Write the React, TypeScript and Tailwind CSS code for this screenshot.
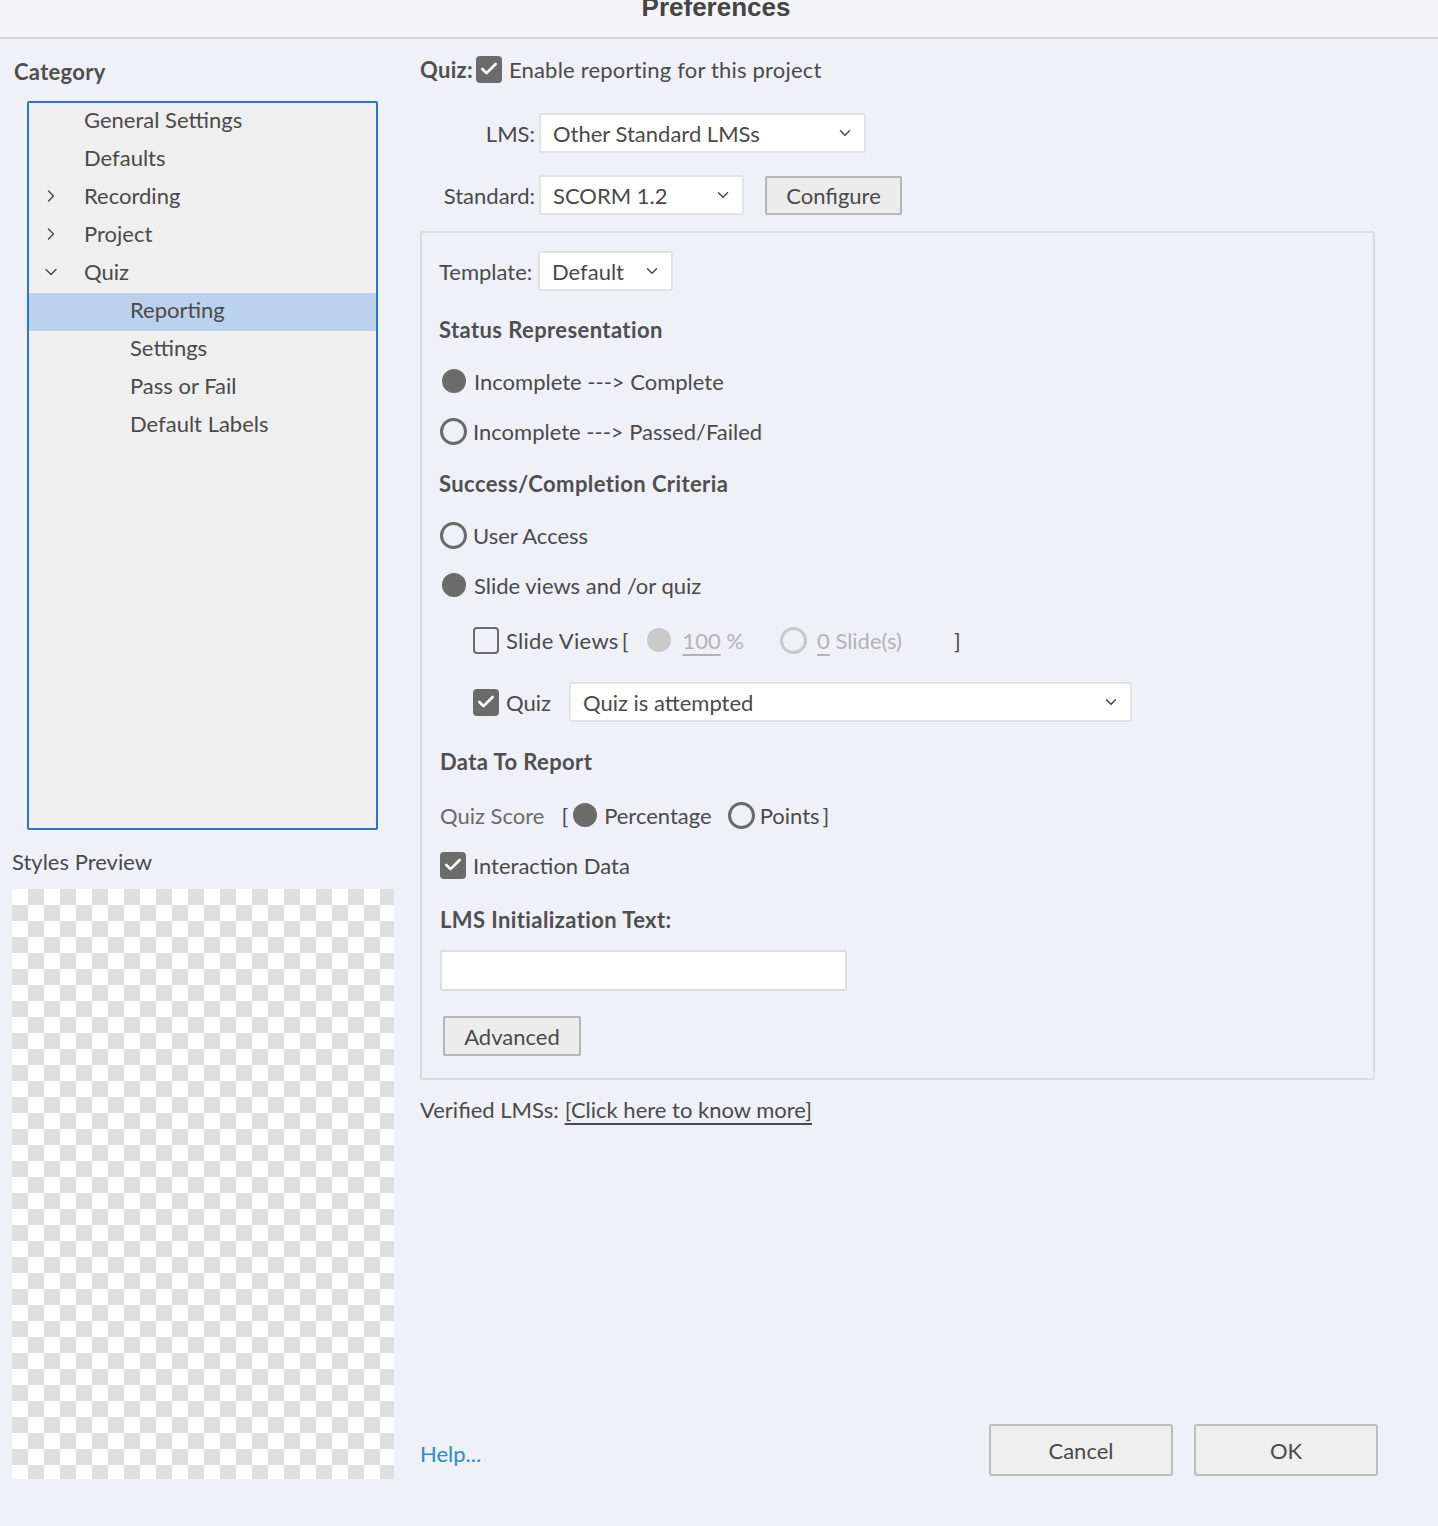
import { ChevronDown, ChevronRight, Check } from "lucide-react"

const font = "font-['Lato','Open_Sans',sans-serif]"

function Checkbox({ checked }: { checked: boolean }) {
  return checked ? (
    <span className="w-[26px] h-[27px] rounded-[4px] bg-[#6b6b6b] flex items-center justify-center flex-shrink-0">
      <Check className="w-[20px] h-[20px] text-white" strokeWidth={3.2} />
    </span>
  ) : (
    <span className="block w-[26px] h-[27px] rounded-[4px] border-[2.5px] border-[#6b6b6b] flex-shrink-0" />
  )
}

function Radio({ checked, disabled }: { checked: boolean; disabled?: boolean }) {
  const color = disabled ? "bg-[#c9c9c9]" : "bg-[#6b6b6b]"
  const ring = disabled ? "border-[#c9c9c9]" : "border-[#6b6b6b]"
  return checked ? (
    <span className={`block w-[24px] h-[24px] rounded-full flex-shrink-0 ${color}`} />
  ) : (
    <span className={`block w-[27px] h-[27px] rounded-full border-[3px] flex-shrink-0 ${ring}`} />
  )
}

function Select({ value, width }: { value: string; width: string }) {
  return (
    <div className={`${width} h-[40px] bg-white border-2 border-[#e3e3e3] rounded-[3px] flex items-center justify-between pl-[12px] pr-[10px]`}>
      <span>{value}</span>
      <ChevronDown className="w-[18px] h-[18px] text-[#4a4a4a]" strokeWidth={2} />
    </div>
  )
}

const tree = [
  { label: "General Settings", level: 0 },
  { label: "Defaults", level: 0 },
  { label: "Recording", level: 0, icon: "right" },
  { label: "Project", level: 0, icon: "right" },
  { label: "Quiz", level: 0, icon: "down" },
  { label: "Reporting", level: 1, selected: true },
  { label: "Settings", level: 1 },
  { label: "Pass or Fail", level: 1 },
  { label: "Default Labels", level: 1 },
]

const heading = "h-[30px] flex items-center font-bold text-[#4f4f4f] tracking-[0.4px]"

export default function App() {
  return (
    <div className={`w-[1438px] h-[1526px] bg-[#f0f1f6] text-[#4a4a4a] text-[22px] overflow-hidden flex flex-col ${font}`}>
      {/* Title bar */}
      <div className="h-[39px] flex-shrink-0 bg-[#f5f5f7] border-b-2 border-[#d6d6d8] flex justify-center overflow-hidden">
        <span className="font-['Liberation_Sans',sans-serif] font-bold text-[26px] text-[#444] leading-none -mt-[6px] ml-[-6px]">Preferences</span>
      </div>

      <div className="flex flex-1">
        {/* Left column */}
        <div className="w-[420px] flex-shrink-0 pl-[12px] flex flex-col">
          <div className="mt-[17px] ml-[2px] h-[30px] flex items-center font-bold text-[#4f4f4f] tracking-[0.3px]">Category</div>
          <div className="mt-[15px] ml-[15px] w-[351px] h-[729px] bg-[#efefef] border-2 border-[#2a74d6] rounded-[2px]">
            {tree.map((item) => (
              <div
                key={item.label}
                className={`h-[38px] flex items-center pb-[5px] ${item.selected ? "bg-[#bcd1ec]" : ""}`}
              >
                <span className="w-[55px] pl-[12px] flex items-center">
                  {item.icon === "right" && <ChevronRight className="w-[20px] h-[20px] text-[#4a4a4a]" strokeWidth={1.7} />}
                  {item.icon === "down" && <ChevronDown className="w-[20px] h-[20px] text-[#4a4a4a]" strokeWidth={1.7} />}
                </span>
                <span className={item.level === 1 ? "ml-[46px]" : ""}>{item.label}</span>
              </div>
            ))}
          </div>
          <div className="mt-[16px] h-[30px] flex items-center">Styles Preview</div>
          <div className="mt-[13px] w-[382px] h-[590px] bg-[conic-gradient(#dfdfdf_25%,#ffffff_0_50%,#dfdfdf_0_75%,#ffffff_0)] bg-[length:32px_32px]" />
        </div>

        {/* Right column */}
        <div className="flex-1 flex flex-col">
          <div className="mt-[16px] h-[28px] flex items-center">
            <span className="font-bold text-[#4f4f4f] mr-[3px] tracking-[0.3px]">Quiz:</span>
            <Checkbox checked />
            <span className="ml-[7px] tracking-[0.2px]">Enable reporting for this project</span>
          </div>

          <div className="mt-[30px] flex items-center">
            <span className="w-[119px] text-right pr-[4px]">LMS:</span>
            <Select value="Other Standard LMSs" width="w-[327px]" />
          </div>

          <div className="mt-[22px] flex items-center">
            <span className="w-[119px] text-right pr-[4px]">Standard:</span>
            <Select value="SCORM 1.2" width="w-[205px]" />
            <button className="ml-[21px] w-[137px] h-[39px] bg-[#ececec] border-2 border-[#b5b5b5] rounded-[2px] flex items-center justify-center">
              Configure
            </button>
          </div>

          {/* Reporting panel */}
          <div className="mt-[16px] w-[955px] border-2 border-[#dcdcdc] rounded-[2px] pl-[17px] pb-[22px] flex flex-col">
            <div className="mt-[18px] flex items-center">
              <span className="w-[99px]">Template:</span>
              <Select value="Default" width="w-[135px]" />
            </div>

            <div className={`mt-[23px] ${heading}`}>Status Representation</div>
            <div className="mt-[22px] h-[30px] flex items-center gap-[8px] pl-[3px]">
              <Radio checked />
              <span>Incomplete ---&gt; Complete</span>
            </div>
            <div className="mt-[20px] h-[30px] flex items-center gap-[6px] pl-[1px]">
              <Radio checked={false} />
              <span>Incomplete ---&gt; Passed/Failed</span>
            </div>

            <div className={`mt-[22px] ${heading}`}>Success/Completion Criteria</div>
            <div className="mt-[22px] h-[30px] flex items-center gap-[6px] pl-[1px]">
              <Radio checked={false} />
              <span>User Access</span>
            </div>
            <div className="mt-[20px] h-[30px] flex items-center gap-[8px] pl-[3px]">
              <Radio checked />
              <span>Slide views and /or quiz</span>
            </div>

            <div className="mt-[25px] h-[30px] flex items-center pl-[34px]">
              <Checkbox checked={false} />
              <span className="ml-[7px] tracking-[0.3px]">Slide Views</span>
              <span className="ml-[3px]">[</span>
              <span className="ml-[19px] flex"><Radio checked disabled /></span>
              <span className="ml-[11px] text-[#b3b3b3]"><span className="underline underline-offset-[5px]">100</span> %</span>
              <span className="ml-[36px] flex"><Radio checked={false} disabled /></span>
              <span className="ml-[10px] text-[#b3b3b3]"><span className="underline underline-offset-[5px]">0</span> Slide(s)</span>
              <span className="ml-[52px]">]</span>
            </div>

            <div className="mt-[27px] h-[40px] flex items-center pl-[34px]">
              <Checkbox checked />
              <span className="ml-[7px]">Quiz</span>
              <span className="ml-[18px] flex"><Select value="Quiz is attempted" width="w-[563px]" /></span>
            </div>

            <div className={`mt-[24px] pl-[1px] ${heading}`}>Data To Report</div>
            <div className="mt-[24px] h-[30px] flex items-center pl-[1px]">
              <span className="text-[#6a6a6a]">Quiz Score</span>
              <span className="ml-[17px]">[</span>
              <span className="ml-[5px] flex"><Radio checked /></span>
              <span className="ml-[7px]">Percentage</span>
              <span className="ml-[16px] flex"><Radio checked={false} /></span>
              <span className="ml-[5px]">Points</span>
              <span className="ml-[3px]">]</span>
            </div>
            <div className="mt-[20px] h-[30px] flex items-center pl-[1px]">
              <Checkbox checked />
              <span className="ml-[7px]">Interaction Data</span>
            </div>

            <div className={`mt-[24px] pl-[1px] ${heading}`}>LMS Initialization Text:</div>
            <div className="mt-[16px] ml-[1px] w-[407px] h-[41px] bg-white border-2 border-[#dedede] rounded-[2px]" />
            <button className="mt-[25px] ml-[4px] w-[138px] h-[40px] bg-[#ececec] border-2 border-[#b5b5b5] rounded-[2px] flex items-center justify-center">
              Advanced
            </button>
          </div>

          <div className="mt-[14px] h-[30px] flex items-center">
            <span>Verified LMSs:</span>
            <span className="ml-[6px] underline underline-offset-[5px]">[Click here to know more]</span>
          </div>

          <div className="mt-auto mb-[50px] flex items-center">
            <span className="text-[#2d8ad6] mt-[6px]">Help...</span>
            <div className="ml-auto mr-[60px] flex gap-[21px]">
              <button className="w-[184px] h-[52px] bg-[#efefef] border-2 border-[#bdbdbd] rounded-[3px]">Cancel</button>
              <button className="w-[184px] h-[52px] bg-[#efefef] border-2 border-[#bdbdbd] rounded-[3px]">OK</button>
            </div>
          </div>
        </div>
      </div>
    </div>
  )
}
